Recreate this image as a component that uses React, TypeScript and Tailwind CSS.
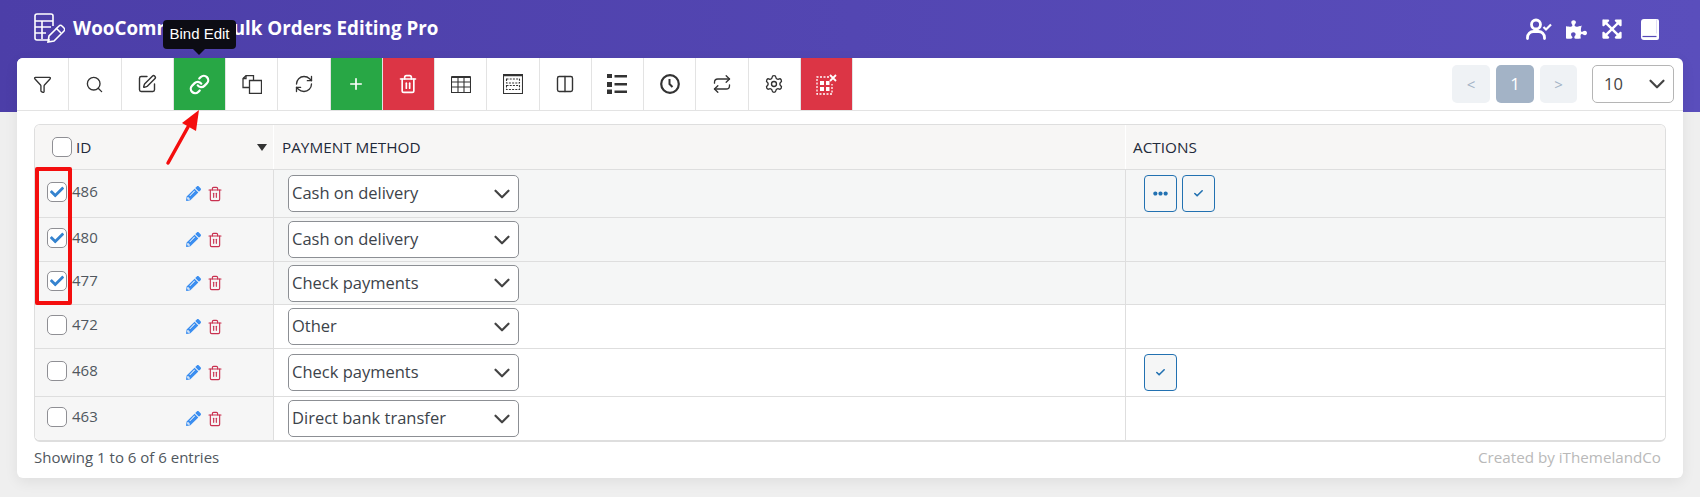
import {
  Funnel,
  Search,
  SquarePen,
  Link,
  RefreshCw,
  Plus,
  Trash2,
  Columns2,
  Repeat,
  Settings,
  ChevronDown,
  Check,
} from 'lucide-react';
import { FaPencilAlt, FaPuzzlePiece, FaEllipsisH, FaCheck, FaExpandArrowsAlt } from 'react-icons/fa';
import { ReactNode } from 'react';

type Row = {
  id: number;
  method: string;
  checked: boolean;
  height: string;
  actions: 'both' | 'check' | 'none';
};

const rows: Row[] = [
  { id: 486, method: 'Cash on delivery', checked: true, height: 'h-[48px]', actions: 'both' },
  { id: 480, method: 'Cash on delivery', checked: true, height: 'h-[44px]', actions: 'none' },
  { id: 477, method: 'Check payments', checked: true, height: 'h-[43px]', actions: 'none' },
  { id: 472, method: 'Other', checked: false, height: 'h-[44px]', actions: 'none' },
  { id: 468, method: 'Check payments', checked: false, height: 'h-[48px]', actions: 'check' },
  { id: 463, method: 'Direct bank transfer', checked: false, height: 'h-[43px]', actions: 'none' },
];

function LogoIcon() {
  return (
    <svg width="32" height="32" viewBox="0 0 32 32" fill="none" stroke="white" strokeWidth="1.6">
      <path d="M17 27H4a2 2 0 0 1-2-2V3a2 2 0 0 1 2-2h14a2 2 0 0 1 2 2v10" />
      <path d="M2 8h18M2 14h16M2 20h11M9 8v18" />
      <path d="M15 29l1-6 10-10a2 2 0 0 1 3 0l2 2a2 2 0 0 1 0 3L21 28z" />
      <path d="M23 15l5 5" />
    </svg>
  );
}

function UserCheckIcon() {
  return (
    <svg width="26" height="22" viewBox="0 0 26 22" fill="none" stroke="white">
      <circle cx="10" cy="6.500" r="4.500" strokeWidth="2.800" />
      <path d="M1.500 20.500v-1a6 6 0 0 1 6-6h5a6 6 0 0 1 6 6v1" strokeWidth="2.800" strokeLinecap="round" />
      <path d="M17.500 9l2.500 2.500 5-5" strokeWidth="2.200" />
    </svg>
  );
}

function BookIcon() {
  return (
    <svg width="18" height="21" viewBox="0 0 18 21" fill="none">
      <path d="M3 0h13a2 2 0 0 1 2 2v17a2 2 0 0 1-2 2H3a3 3 0 0 1-3-3V3a3 3 0 0 1 3-3z" fill="white" />
      <path d="M1.500 17.500h14" stroke="#5549b8" strokeWidth="1.200" />
      <path d="M15.500 0.500v14" stroke="#d9d5f2" strokeWidth="0.800" />
    </svg>
  );
}

function CopyDocsIcon() {
  return (
    <svg width="20" height="19" viewBox="0 0 20 19" fill="none" stroke="#333" strokeWidth="1.300">
      <path d="M7.500 12.500H1V3.500L4 .7h7.500v4.800" />
      <path d="M1 3.500h3V.7" />
      <path d="M7.500 5.500h12v13h-12z" />
    </svg>
  );
}

function TableIcon() {
  return (
    <svg width="20" height="17" viewBox="0 0 20 17" fill="none" stroke="#333" strokeWidth="1.100">
      <path d="M0.500 1h19v15.500H0.500z" />
      <path d="M0.500 1h19" strokeWidth="1.800" />
      <path d="M0.500 6h19M0.500 11h19M7 1v15.500M13 1v15.500" />
    </svg>
  );
}

function DottedTableIcon() {
  return (
    <svg width="20" height="20" viewBox="0 0 20 20" fill="none" stroke="#333" strokeWidth="1.100">
      <path d="M0.500 0.500h19v19H0.500z" />
      <path d="M0.500 1.500h19" strokeWidth="1.400" />
      <path d="M3.500 5h13v4h-13zM3.500 11.500h13v4h-13z" strokeDasharray="2 1.200" />
    </svg>
  );
}

function ListIcon() {
  return (
    <svg width="20" height="20" viewBox="0 0 20 20" fill="#333">
      <path d="M0 0h5v4H0zM0 8h5v5H0zM0 15.500h5V20H0zM7.500 1h12.500v2.500H7.500zM7.500 9h12.500v2.500H7.500zM7.500 16.500h12.500V19H7.500z" />
    </svg>
  );
}

function ClockIcon() {
  return (
    <svg width="20" height="20" viewBox="0 0 20 20" fill="none" stroke="#333" strokeWidth="2.200">
      <circle cx="10" cy="10" r="8.800" />
      <path d="M9.500 5v5l3 3" strokeWidth="2" />
    </svg>
  );
}

function GridRemoveIcon() {
  return (
    <svg width="21" height="21" viewBox="0 0 21 21" fill="none" stroke="white">
      <path d="M13 3H1v17h15V10" strokeDasharray="2 1.500" strokeWidth="1.300" />
      <path d="M4 7h4v4H4zM10 7h3.500v4H10zM4 13h4v4H4zM10 13h3.500v4H10z" fill="white" stroke="none" />
      <path d="M14 1l6 6M20 1l-6 6" strokeWidth="1.800" />
    </svg>
  );
}

function ToolButton({ children, bg = 'bg-white' }: { children: ReactNode; bg?: string }) {
  return (
    <div className={`flex h-[52px] w-[52.25px] items-center justify-center border-r border-[#e3e3e3] ${bg}`}>
      {children}
    </div>
  );
}

function CheckBox({ checked }: { checked?: boolean }) {
  return (
    <div className="flex h-[20px] w-[20px] shrink-0 items-center justify-center rounded-[5px] border border-[#8f8f94] bg-white">
      {checked && <FaCheck className="text-[14px] text-[#3583cf]" />}
    </div>
  );
}

function ActionButton({ children, tinted }: { children: ReactNode; tinted?: boolean }) {
  return (
    <div
      className={`flex h-[37px] w-[33px] items-center justify-center rounded-[4px] border border-[#2271b1] text-[#2271b1] ${
        tinted ? 'bg-[#f5f6f6]' : ''
      }`}
    >
      {children}
    </div>
  );
}

function MethodSelect({ value }: { value: string }) {
  return (
    <div className="flex h-[37px] w-[231px] items-center justify-between rounded-[5px] border border-[#8c8f94] bg-white pl-[3px] pr-[3px] text-[16.5px] text-[#3c434a]">
      <span>{value}</span>
      <ChevronDown size={26} strokeWidth={2} className="text-[#444]" />
    </div>
  );
}

export default function App() {
  return (
    <div className="relative h-[497px] w-[1700px] overflow-hidden bg-[#efefef] font-['Open_Sans',sans-serif]">
      {/* Purple header */}
      <div className="flex h-[112px] items-start justify-between bg-gradient-to-r from-[#4c3ea8] to-[#5a4ebc] pl-[33px] pr-[41px] pt-[13px]">
        <div className="flex items-center gap-[8px]">
          <LogoIcon />
          <span className="-mt-[2px] text-[18.8px] font-bold text-white">WooCommerce Bulk Orders Editing Pro</span>
        </div>
        <div className="flex items-center gap-[14px] pt-[5px] text-white">
          <UserCheckIcon />
          <FaPuzzlePiece className="text-[21px]" />
          <FaExpandArrowsAlt className="text-[22px]" />
          <div className="ml-[4px]">
            <BookIcon />
          </div>
        </div>
      </div>

      {/* Main card */}
      <div className="relative mx-[17px] -mt-[54px] h-[420px] rounded-[6px] bg-white shadow-[0_4px_14px_rgba(0,0,0,0.07)]">
        {/* Toolbar */}
        <div className="flex h-[53px] items-center justify-between border-b border-[#e3e3e3] pr-[9px]">
          <div className="flex overflow-hidden rounded-tl-[6px]">
            <ToolButton><Funnel size={19} strokeWidth={1.7} className="text-[#333]" /></ToolButton>
            <ToolButton><Search size={19} strokeWidth={1.7} className="text-[#333]" /></ToolButton>
            <ToolButton><SquarePen size={20} strokeWidth={1.7} className="text-[#333]" /></ToolButton>
            <ToolButton bg="bg-[#28a745]"><Link size={21} strokeWidth={2.600} className="text-white" /></ToolButton>
            <ToolButton><CopyDocsIcon /></ToolButton>
            <ToolButton><RefreshCw size={20} strokeWidth={1.600} className="text-[#333]" /></ToolButton>
            <ToolButton bg="bg-[#28a745]"><Plus size={18} strokeWidth={2.200} className="text-white" /></ToolButton>
            <ToolButton bg="bg-[#dc3545]"><Trash2 size={20} strokeWidth={2} className="text-white" /></ToolButton>
            <ToolButton><TableIcon /></ToolButton>
            <ToolButton><DottedTableIcon /></ToolButton>
            <ToolButton><Columns2 size={20} strokeWidth={1.700} className="text-[#333]" /></ToolButton>
            <ToolButton><ListIcon /></ToolButton>
            <ToolButton><ClockIcon /></ToolButton>
            <ToolButton><Repeat size={20} strokeWidth={1.600} className="text-[#333]" /></ToolButton>
            <ToolButton><Settings size={20} strokeWidth={1.600} className="text-[#333]" /></ToolButton>
            <ToolButton bg="bg-[#dc3545]"><GridRemoveIcon /></ToolButton>
          </div>
          <div className="flex items-center">
            <div className="flex h-[38px] w-[38px] items-center justify-center rounded-[5px] bg-[#eff2f5] text-[15px] text-[#a3b3c6]">&lt;</div>
            <div className="ml-[6px] flex h-[38px] w-[38px] items-center justify-center rounded-[5px] bg-[#a3b3c6] text-[17px] text-white">1</div>
            <div className="ml-[6px] flex h-[38px] w-[37px] items-center justify-center rounded-[5px] bg-[#eff2f5] text-[15px] text-[#a3b3c6]">&gt;</div>
            <div className="ml-[15px] flex h-[38px] w-[82px] items-center justify-between rounded-[5px] border border-[#b5b5b5] bg-white pl-[11px] pr-[3px] text-[16.5px] text-[#444]">
              <span>10</span>
              <ChevronDown size={26} strokeWidth={2} className="text-[#444]" />
            </div>
          </div>
        </div>

        {/* Table */}
        <div className="mx-[17px] mt-[13px] overflow-hidden rounded-[6px] border border-b-2 border-[#dedede]">
          <div className="flex h-[45px] border-b border-[#dedede] bg-[#f7f6f5] text-[15.3px] font-medium text-[#1f2a3a]">
            <div className="flex w-[239px] items-center border-r border-white pl-[17px] pr-[6px]">
              <CheckBox />
              <span className="ml-[4px] flex-1">ID</span>
              <div className="h-0 w-0 border-x-[5px] border-t-[7px] border-x-transparent border-t-[#333]" />
            </div>
            <div className="flex w-[852px] items-center border-r border-white pl-[8px]">PAYMENT METHOD</div>
            <div className="flex flex-1 items-center pl-[7px]">ACTIONS</div>
          </div>
          {rows.map((row, i) => (
            <div
              key={row.id}
              className={`flex ${row.height} ${i < rows.length - 1 ? 'border-b border-[#dedede]' : ''} ${
                row.checked ? 'bg-[#f5f6f6]' : 'bg-white'
              } text-[15px] text-[#50575e]`}
            >
              <div className="flex w-[239px] items-center border-r border-[#dedede] bg-[#f6f6f6] pl-[12px]">
                <div className="-mt-[4px]">
                  <CheckBox checked={row.checked} />
                </div>
                <span className="ml-[5px] -mt-[5px] w-[114px]">{row.id}</span>
                <FaPencilAlt className="text-[15px] text-[#3b8ef0]" />
                <Trash2 size={16} strokeWidth={1.700} className="ml-[6px] text-[#c9304f]" />
              </div>
              <div className="flex w-[852px] items-center border-r border-[#dedede] pl-[14px]">
                <MethodSelect value={row.method} />
              </div>
              <div className="flex flex-1 items-center gap-[5px] pl-[17.5px]">
                {row.actions === 'both' && (
                  <ActionButton>
                    <FaEllipsisH className="text-[15px]" />
                  </ActionButton>
                )}
                {row.actions !== 'none' && (
                  <ActionButton tinted={row.actions === 'check'}>
                    <Check size={11} strokeWidth={3.500} />
                  </ActionButton>
                )}
              </div>
            </div>
          ))}
        </div>

        {/* Footer */}
        <div className="mx-[17px] mt-[4px] flex items-center justify-between text-[15px]">
          <span className="text-[#50575e]">Showing 1 to 6 of 6 entries</span>
          <span className="mr-[5px] text-[15.2px] text-[#b9b9b9]">Created by iThemelandCo</span>
        </div>
      </div>

      {/* Tooltip over the Bind Edit button */}
      <div className="absolute left-[163px] top-[20px] flex h-[29px] w-[73px] items-center justify-center rounded-[4px] bg-[#0c0c14] font-['Liberation_Sans',sans-serif] text-[15px] text-white">
        Bind Edit
        <div className="absolute left-[30px] top-[29px] h-0 w-0 border-x-[6px] border-t-[6px] border-x-transparent border-t-[#0c0c14]" />
      </div>

      {/* Red annotation arrow */}
      <svg className="absolute left-[160px] top-[105px]" width="50" height="65" viewBox="0 0 50 65" fill="none">
        <path d="M8 58L28 22" stroke="#f40e0e" strokeWidth="3.500" strokeLinecap="round" />
        <path d="M39 5L36 26L22 18z" fill="#f40e0e" />
      </svg>

      {/* Red annotation rectangle */}
      <div className="absolute left-[35px] top-[167px] h-[138px] w-[37px] rounded-[2px] border-[4px] border-[#f40e0e]" />
    </div>
  );
}
